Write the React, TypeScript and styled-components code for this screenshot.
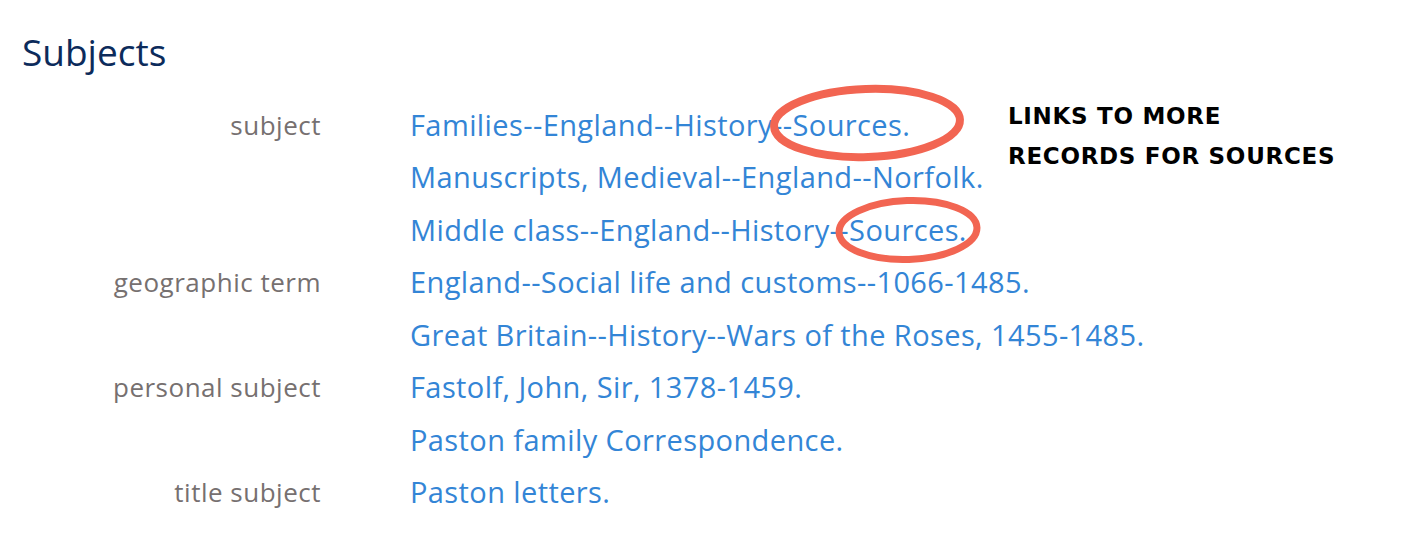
import React from "react";
import styled, { createGlobalStyle } from "styled-components";

const Global = createGlobalStyle`
  html, body { margin: 0; padding: 0; background: #fff; }
  body { font-family: "Open Sans", "Noto Sans", sans-serif; }
`;

const Page = styled.div`
  position: relative;
  width: 1416px;
  height: 548px;
  padding: 26px 0 0 22px;
  box-sizing: border-box;
  overflow: hidden;
`;

const Heading = styled.h2`
  margin: 0;
  font-weight: 400;
  font-size: 37px;
  line-height: 52px;
  color: #0c2b5b;
`;

const List = styled.dl`
  display: grid;
  grid-template-columns: 299px 1fr;
  column-gap: 89px;
  margin: 21px 0 0 0;
`;

const Term = styled.dt`
  grid-column: 1;
  text-align: right;
  font-size: 26px;
  letter-spacing: 0.5px;
  line-height: 52.45px;
  color: #767070;
`;

const Def = styled.dd`
  grid-column: 2;
  margin: 0;
  font-size: 29px;
  letter-spacing: 0.4px;
  line-height: 52.45px;
`;

const Link = styled.a`
  color: #3385d6;
  text-decoration: none;
`;

const Note = styled.div`
  position: absolute;
  left: 1008px;
  top: 96px;
  font-family: "DejaVu Sans", "Liberation Sans", sans-serif;
  font-weight: 700;
  font-size: 23px;
  letter-spacing: 0.7px;
  line-height: 40px;
  color: #000;
`;

const Marks = styled.svg`
  position: absolute;
  left: 0;
  top: 0;
  pointer-events: none;
`;

type Row = { label?: string; text: string };
const rows: Row[] = [
  { label: "subject", text: "Families--England--History--Sources." },
  { text: "Manuscripts, Medieval--England--Norfolk." },
  { text: "Middle class--England--History--Sources." },
  { label: "geographic term", text: "England--Social life and customs--1066-1485." },
  { text: "Great Britain--History--Wars of the Roses, 1455-1485." },
  { label: "personal subject", text: "Fastolf, John, Sir, 1378-1459." },
  { text: "Paston family Correspondence." },
  { label: "title subject", text: "Paston letters." },
];

export default function App() {
  return (
    <Page>
      <Global />
      <Heading>Subjects</Heading>
      <List>
        {rows.map((r, i) => (
          <React.Fragment key={i}>
            <Term>{r.label ?? ""}</Term>
            <Def>
              <Link href="#">{r.text}</Link>
            </Def>
          </React.Fragment>
        ))}
      </List>
      <Note>
        LINKS TO MORE
        <br />
        RECORDS FOR SOURCES
      </Note>
      <Marks width="1416" height="548" viewBox="0 0 1416 548">
        <ellipse cx="867" cy="123" rx="93" ry="34" fill="none" stroke="#f26552" strokeWidth="8" transform="rotate(-2 867 123)" />
        <ellipse cx="908" cy="230" rx="69" ry="29.5" fill="none" stroke="#f26552" strokeWidth="7" transform="rotate(-2 908 230)" />
      </Marks>
    </Page>
  );
}
